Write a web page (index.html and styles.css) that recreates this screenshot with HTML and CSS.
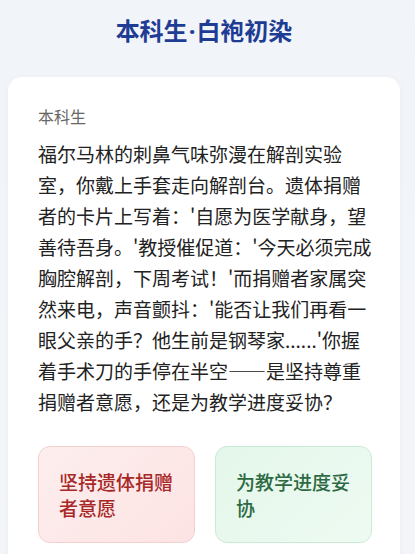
FILE: index.html
```html
<!DOCTYPE html>
<html lang="zh-CN">
<head>
  <meta charset="UTF-8">
  <title>本科生·白袍初染</title>
  <link rel="stylesheet" href="styles.css">
</head>
<body>

<h1 class="stage-title">本科生<span class="dot">·</span>白袍初染</h1>

<div class="scene-card">
  <div class="scene-role">本科生</div>
  <p class="scene-text">福尔马林的刺鼻气味弥漫在解剖实验室，你戴上手套走向解剖台。遗体捐赠者的卡片上写着：'自愿为医学献身，望善待吾身。'教授催促道：'今天必须完成胸腔解剖，下周考试！'而捐赠者家属突然来电，声音颤抖：'能否让我们再看一眼父亲的手？他生前是钢琴家......'你握着手术刀的手停在半空——是坚持尊重捐赠者意愿，还是为教学进度妥协？</p>

  <div class="choices">
    <button class="choice choice-respect">坚持遗体捐赠者意愿</button>
    <button class="choice choice-schedule">为教学进度妥协</button>
  </div>
</div>

</body>
</html>
```

FILE: styles.css
```css
body {
  margin: 0;
  padding: 0 15px 0 8px;
  font-family: "Noto Sans CJK SC", "Noto Sans", sans-serif;
  background: linear-gradient(180deg, #f1f4f9, #f3f5f9);
  color: #222;
}
.stage-title {
  margin: 0;
  padding: 12px 0 0;
  height: 77px;
  box-sizing: border-box;
  text-align: center;
  font-size: 24px;
  line-height: 36px;
  font-weight: 700;
  color: #1e3c94;
}
.stage-title .dot {
  font-family: "Noto Sans", sans-serif;
  margin: 0 1px;
}
.scene-card {
  background: #fff;
  border-radius: 14px;
  padding: 27px 24px 30px 30px;
  box-shadow: 0 1px 6px rgba(30, 50, 90, 0.04);
}
.scene-role {
  font-size: 16px;
  color: #666;
  line-height: 24px;
}
.scene-text {
  margin: 10px 0 0;
  font-size: 19px;
  line-height: 31px;
  color: #222;
}
.choices {
  display: grid;
  grid-template-columns: 157px 157px;
  gap: 20px;
  margin-top: 29px;
}
.choice {
  height: 97px;
  padding: 0 20px;
  border-radius: 12px;
  text-align: left;
  font-family: inherit;
  font-size: 19px;
  font-weight: 500;
  line-height: 26px;
}
.choice-respect {
  background: linear-gradient(135deg, #fdeeee, #fde3e3);
  border: 1px solid #f6cfcf;
  color: #a82828;
}
.choice-schedule {
  background: linear-gradient(135deg, #e4f6ea, #eefbf2);
  border: 1px solid #c9ebd4;
  color: #2d6a43;
}
```
